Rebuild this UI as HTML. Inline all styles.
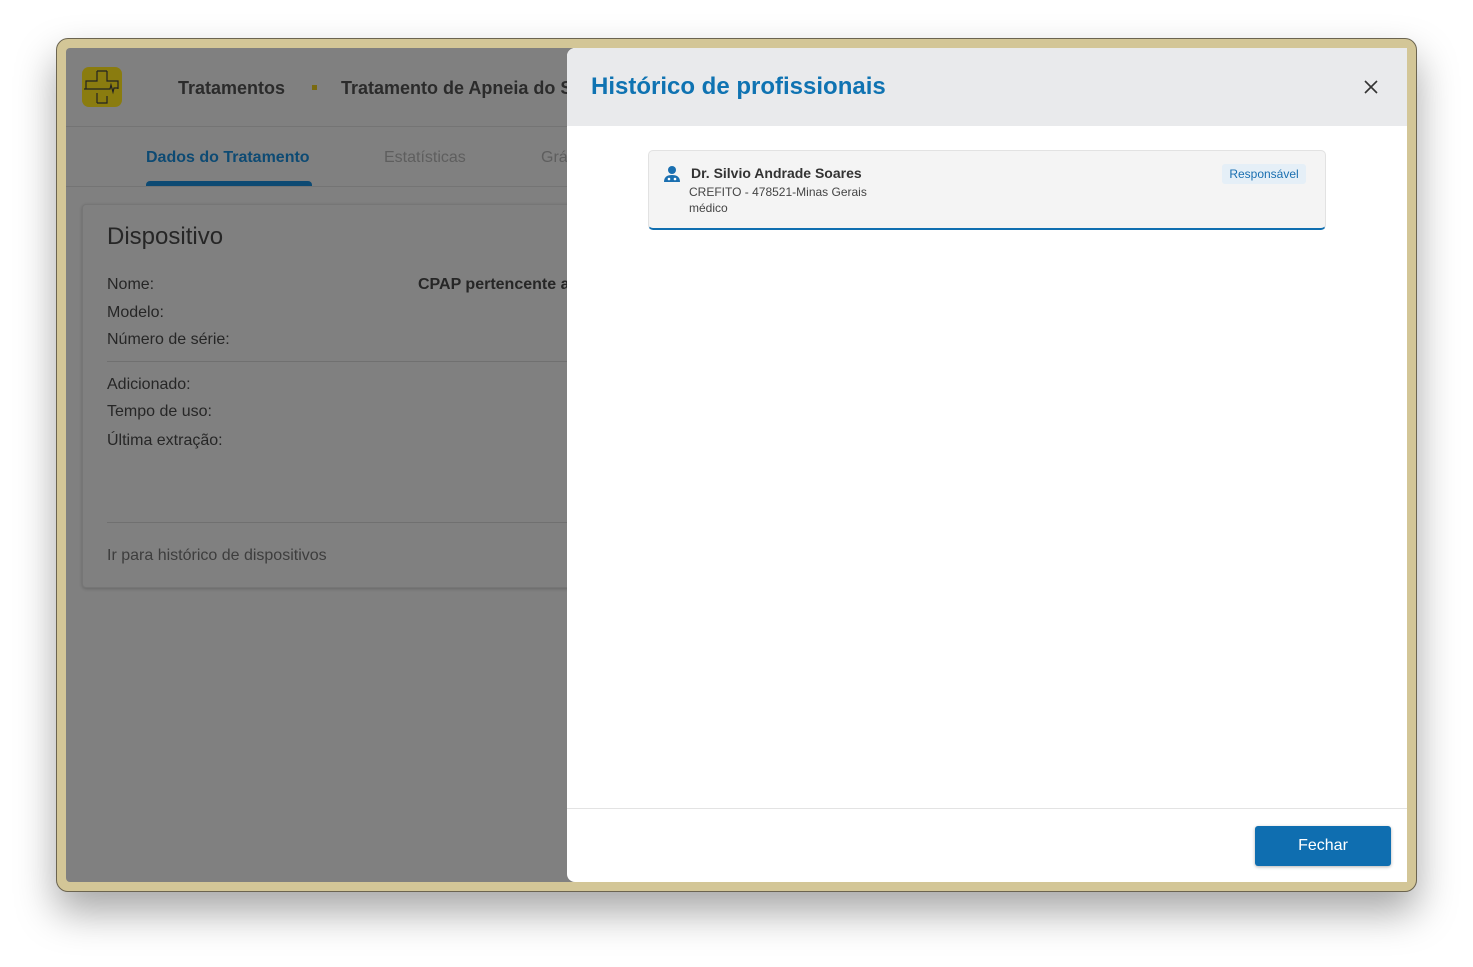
<!DOCTYPE html>
<html><head><meta charset="utf-8"><style>
*{margin:0;padding:0;box-sizing:border-box}
body{width:1473px;height:967px;background:#fff;font-family:"Liberation Sans",sans-serif;position:relative;overflow:hidden}
.frame{position:absolute;left:56px;top:38px;width:1361px;height:854px;background:#d3c697;border-radius:12px;border:1px solid #6b6450;box-shadow:0 20px 40px rgba(0,0,0,.35)}
.screen{position:absolute;left:66px;top:48px;width:1341px;height:834px;background:#808080;overflow:hidden;border-radius:4px}
.t{position:absolute;white-space:nowrap}
.modal{position:absolute;left:567px;top:48px;width:840px;height:834px;background:#fff;border-radius:8px 0 0 8px;overflow:hidden}
</style></head><body>
<div class="frame"></div>
<div class="screen">
 <div style="position:absolute;left:16px;top:19px;width:40px;height:40px;background:#8a7c0f;border-radius:7px"></div>
 <svg style="position:absolute;left:16px;top:19px" width="40" height="40" viewBox="0 0 40 40" fill="none" stroke="#222" stroke-width="1.2"><path d="M15 4V14H4V22 M25 4H15 M25 4V14H36V22 M2 22H28L29 18L31 25L32 21H36 M15 36V26 M15 36H25V29"/></svg>
 <div class="t" style="left:112px;top:30px;font-size:18px;font-weight:bold;color:#2b2b2b">Tratamentos</div>
 <div style="position:absolute;left:246px;top:37px;width:5px;height:5px;background:#7a6a10"></div>
 <div class="t" style="left:275px;top:30px;font-size:18px;font-weight:bold;color:#2b2b2b">Tratamento de Apneia do S</div>
 <div style="position:absolute;left:0;top:78px;width:100%;height:1px;background:#747474"></div>
 <div class="t" style="left:80px;top:101px;font-size:16px;font-weight:bold;color:#0d4a73">Dados do Tratamento</div>
 <div class="t" style="left:318px;top:101px;font-size:16px;color:#5e5e5e">Estatísticas</div>
 <div class="t" style="left:475px;top:101px;font-size:16px;color:#5e5e5e">Grá</div>
 <div style="position:absolute;left:80px;top:133px;width:166px;height:6px;background:#0d4a73;border-radius:4px 4px 0 0"></div>
 <div style="position:absolute;left:0;top:138px;width:100%;height:1px;background:#747474"></div>
 <div style="position:absolute;left:16px;top:156px;width:560px;height:384px;border:1px solid #767676;border-radius:4px;background:#808080;box-shadow:0 1px 3px rgba(0,0,0,.2)"></div>
 <div class="t" style="left:41px;top:175px;font-size:24px;color:#262626">Dispositivo</div>
 <div class="t" style="left:41px;top:228px;font-size:16px;color:#262626">Nome:</div>
 <div class="t" style="left:352px;top:228px;font-size:16px;font-weight:bold;color:#262626">CPAP pertencente a</div>
 <div class="t" style="left:41px;top:256px;font-size:16px;color:#262626">Modelo:</div>
 <div class="t" style="left:41px;top:283px;font-size:16px;color:#262626">Número de série:</div>
 <div style="position:absolute;left:41px;top:313px;width:520px;height:1px;background:#707070"></div>
 <div class="t" style="left:41px;top:328px;font-size:16px;color:#262626">Adicionado:</div>
 <div class="t" style="left:41px;top:355px;font-size:16px;color:#262626">Tempo de uso:</div>
 <div class="t" style="left:41px;top:384px;font-size:16px;color:#262626">Última extração:</div>
 <div style="position:absolute;left:41px;top:474px;width:520px;height:1px;background:#707070"></div>
 <div class="t" style="left:41px;top:499px;font-size:16px;color:#3d3d3d">Ir para histórico de dispositivos</div>
</div>
<div class="modal">
 <div style="position:absolute;left:0;top:0;width:840px;height:78px;background:#e9eaec"></div>
 <div class="t" style="left:24px;top:25px;font-size:24px;font-weight:bold;color:#0f73b2">Histórico de profissionais</div>
 <svg style="position:absolute;left:796px;top:31px" width="16" height="16" viewBox="0 0 16 16" stroke="#333" stroke-width="1.6"><path d="M2 2L14 14M14 2L2 14"/></svg>
 <div style="position:absolute;left:81px;top:102px;width:678px;height:80px;background:#f4f4f4;border:1px solid #e2e2e2;border-bottom:2px solid #0f6eb0;border-radius:5px"></div>
 <svg style="position:absolute;left:96px;top:117px" width="18" height="18" viewBox="0 0 18 18" fill="#1a6fb0"><circle cx="9" cy="5" r="4"/><path d="M1 17C1 12 4 10 9 10C14 10 17 12 17 17Z"/><circle cx="6" cy="14" r="1.3" fill="#fff"/><circle cx="12" cy="14" r="1.3" fill="#fff"/></svg>
 <div class="t" style="left:124px;top:117px;font-size:14px;font-weight:bold;color:#333">Dr. Silvio Andrade Soares</div>
 <div class="t" style="left:122px;top:137px;font-size:12px;color:#444">CREFITO - 478521-Minas Gerais</div>
 <div class="t" style="left:122px;top:153px;font-size:12px;color:#444">médico</div>
 <div style="position:absolute;left:655px;top:116px;width:84px;height:20px;background:#e5eff7;border-radius:3px;font-size:12px;color:#1a6fb0;text-align:center;line-height:20px">Responsável</div>
 <div style="position:absolute;left:0;top:760px;width:840px;height:1px;background:#e3e3e3"></div>
 <div style="position:absolute;left:688px;top:778px;width:136px;height:40px;background:#0f6eb0;border-radius:3px;color:#fff;font-size:16px;text-align:center;line-height:40px;box-shadow:0 1px 3px rgba(0,0,0,.3)">Fechar</div>
</div>
</body></html>
